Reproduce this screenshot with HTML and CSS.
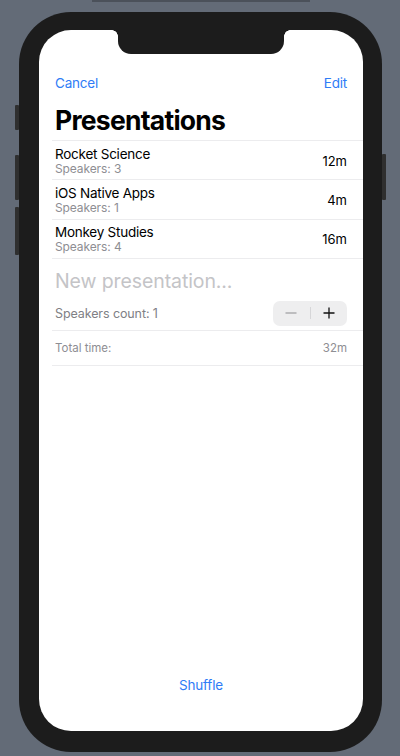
FILE: index.html
```html
<!DOCTYPE html>
<html lang="en">
<head>
<meta charset="utf-8">
<title>Presentations</title>
<link rel="stylesheet" href="styles.css">
</head>
<body>
<div class="topbar"></div>
<div class="phone">
  <span class="side side-l1"></span>
  <span class="side side-l2"></span>
  <span class="side side-l3"></span>
  <span class="side side-r1"></span>
  <div class="screen">
    <div class="notch"></div>
    <header class="nav">
      <span class="link">Cancel</span>
      <span class="link">Edit</span>
    </header>
    <h1 class="large-title">Presentations</h1>
    <ul class="list">
      <li class="row">
        <div class="row-text">
          <div class="row-title">Rocket Science</div>
          <div class="row-sub">Speakers: 3</div>
        </div>
        <span class="row-time">12m</span>
      </li>
      <li class="row">
        <div class="row-text">
          <div class="row-title">iOS Native Apps</div>
          <div class="row-sub">Speakers: 1</div>
        </div>
        <span class="row-time">4m</span>
      </li>
      <li class="row">
        <div class="row-text">
          <div class="row-title">Monkey Studies</div>
          <div class="row-sub">Speakers: 4</div>
        </div>
        <span class="row-time">16m</span>
      </li>
    </ul>
    <div class="form">
      <div class="new-field">New presentation...</div>
      <div class="count-row">
        <span class="count-label">Speakers count: 1</span>
        <div class="stepper">
          <span class="step step-minus">
            <svg width="12" height="12" viewBox="0 0 12 12"><path d="M0.5 6H11.5" stroke="#a3a3a6" stroke-width="1.3"/></svg>
          </span>
          <span class="step-div"></span>
          <span class="step step-plus">
            <svg width="12" height="12" viewBox="0 0 12 12"><path d="M0.5 6H11.5M6 0.5V11.5" stroke="#111" stroke-width="1.3"/></svg>
          </span>
        </div>
      </div>
      <div class="total-row">
        <span>Total time:</span>
        <span>32m</span>
      </div>
    </div>
    <footer class="footer">
      <span class="link">Shuffle</span>
    </footer>
  </div>
</div>
</body>
</html>
```
FILE: styles.css
```css
* { box-sizing: border-box; }
html, body { margin: 0; padding: 0; }
body {
  background: #636b77;
  width: 400px;
  height: 756px;
  overflow: hidden;
  font-family: Inter, "Noto Sans", sans-serif;
}
.topbar {
  width: 218px;
  height: 2px;
  margin-left: 92px;
  background: #4b515a;
}
.phone {
  position: relative;
  margin: 10px 0 0 19px;
  width: 363px;
  height: 740px;
  border-radius: 52px;
  background: #1c1c1c;
  padding: 18px 19px 21px 20px;
}
.side {
  position: absolute;
  width: 4px;
  background: #2f2f2f;
  border-radius: 1px;
}
.side-l1 { left: -4px; top: 93px; height: 25px; }
.side-l2 { left: -4px; top: 143px; height: 45px; }
.side-l3 { left: -4px; top: 195px; height: 48px; }
.side-r1 { right: -4px; top: 142px; height: 46px; }
.screen {
  position: relative;
  height: 701px;
  background: #fff;
  border-radius: 32px;
  overflow: hidden;
  display: flex;
  flex-direction: column;
  padding-top: 31px;
}
.notch {
  position: absolute;
  top: 0;
  left: 79px;
  width: 166px;
  height: 24px;
  background: #1c1c1c;
  border-radius: 0 0 13px 13px;
}
.notch::before, .notch::after {
  content: "";
  position: absolute;
  top: 0;
  width: 6px;
  height: 6px;
  background: radial-gradient(circle at 0 100%, transparent 5.5px, #1c1c1c 6px);
}
.notch::before { left: -6px; }
.notch::after { right: -6px; background: radial-gradient(circle at 100% 100%, transparent 5.5px, #1c1c1c 6px); }
.nav {
  height: 44px;
  display: flex;
  align-items: center;
  justify-content: space-between;
  padding: 0 16px;
}
.link {
  color: #2f7cf6;
  font-size: 13.5px;
  letter-spacing: -0.2px;
}
.large-title {
  margin: 0;
  height: 35px;
  padding: 1px 16px 0;
  font-size: 26.5px;
  line-height: 29px;
  font-weight: 700;
  color: #000;
  letter-spacing: -0.75px;
}
.list {
  list-style: none;
  margin: 0 0 0 13px;
  padding: 0;
  border-top: 1px solid #ececee;
}
.row {
  height: 39.4px;
  display: flex;
  align-items: center;
  justify-content: space-between;
  padding: 1px 16px 0 3px;
  border-bottom: 1px solid #ececee;
}
.row-title {
  font-size: 13.5px;
  line-height: 16px;
  color: #000;
  letter-spacing: -0.25px;
}
.row-sub {
  font-size: 12px;
  line-height: 14px;
  color: #8e8e93;
  letter-spacing: -0.1px;
}
.row-time {
  font-size: 13px;
  color: #000;
}
.form {
  margin-left: 13px;
}
.new-field {
  height: 39px;
  padding: 7px 0 0 3px;
  font-size: 19.5px;
  line-height: 30px;
  color: #c4c4c7;
  letter-spacing: -0.1px;
}
.count-row {
  height: 33px;
  display: flex;
  align-items: center;
  justify-content: space-between;
  padding: 0 16px 2px 3px;
  border-bottom: 1px solid #ececee;
}
.count-label {
  font-size: 12.5px;
  color: #808085;
  letter-spacing: -0.1px;
}
.stepper {
  width: 74px;
  height: 25px;
  border-radius: 7px;
  background: #eeeeef;
  display: flex;
  align-items: center;
}
.step {
  flex: 1;
  display: flex;
  justify-content: center;
  align-items: center;
}
.step-div {
  width: 1px;
  height: 12px;
  background: #d6d6d8;
}
.total-row {
  height: 35px;
  display: flex;
  align-items: center;
  justify-content: space-between;
  padding: 0 16px 0 3px;
  border-bottom: 1px solid #ececee;
  font-size: 11.5px;
  color: #8e8e93;
}
.footer {
  margin-top: auto;
  height: 44px;
  margin-bottom: 24px;
  display: flex;
  align-items: center;
  justify-content: center;
}
```
